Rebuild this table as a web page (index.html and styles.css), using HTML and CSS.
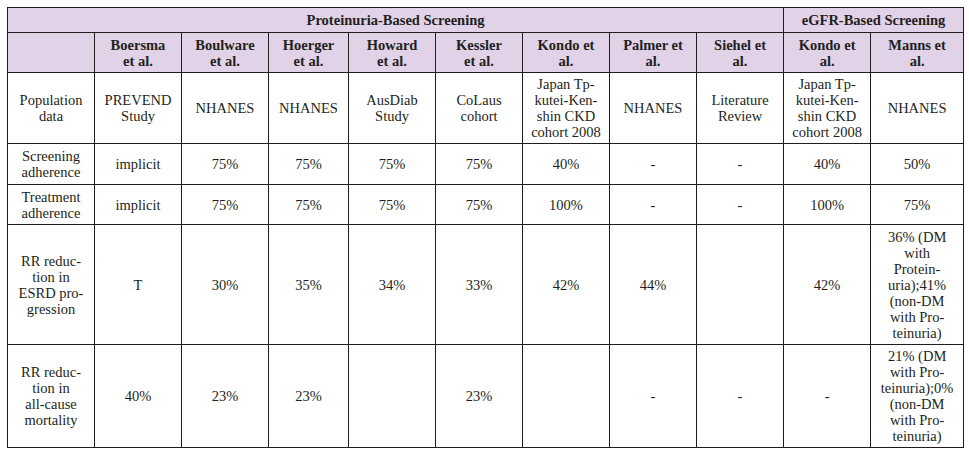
FILE: index.html
```html
<!DOCTYPE html>
<html>
<head>
<meta charset="utf-8">
<link rel="stylesheet" href="styles.css">
</head>
<body>
<table class="grid">
  <colgroup>
    <col class="c87"><col class="c87"><col class="c87"><col class="c80"><col class="c87"><col class="c87"><col class="c87"><col class="c87"><col class="c87"><col class="c87"><col class="c93">
  </colgroup>
  <tr class="r-title head">
    <th colspan="9">Proteinuria-Based Screening</th>
    <th colspan="2">eGFR-Based Screening</th>
  </tr>
  <tr class="r-authors head">
    <th></th>
    <th>Boersma<br>et al.</th>
    <th>Boulware<br>et al.</th>
    <th>Hoerger<br>et al.</th>
    <th>Howard<br>et al.</th>
    <th>Kessler<br>et al.</th>
    <th>Kondo et<br>al.</th>
    <th>Palmer et<br>al.</th>
    <th>Siehel et<br>al.</th>
    <th>Kondo et<br>al.</th>
    <th>Manns et<br>al.</th>
  </tr>
  <tr class="r-pop">
    <td>Population<br>data</td>
    <td>PREVEND<br>Study</td>
    <td>NHANES</td>
    <td>NHANES</td>
    <td>AusDiab<br>Study</td>
    <td>CoLaus<br>cohort</td>
    <td>Japan Tp-<br>kutei-Ken-<br>shin CKD<br>cohort 2008</td>
    <td>NHANES</td>
    <td>Literature<br>Review</td>
    <td>Japan Tp-<br>kutei-Ken-<br>shin CKD<br>cohort 2008</td>
    <td>NHANES</td>
  </tr>
  <tr class="r-screen">
    <td>Screening<br>adherence</td>
    <td>implicit</td>
    <td>75%</td>
    <td>75%</td>
    <td>75%</td>
    <td>75%</td>
    <td>40%</td>
    <td>-</td>
    <td>-</td>
    <td>40%</td>
    <td>50%</td>
  </tr>
  <tr class="r-treat">
    <td>Treatment<br>adherence</td>
    <td>implicit</td>
    <td>75%</td>
    <td>75%</td>
    <td>75%</td>
    <td>75%</td>
    <td>100%</td>
    <td>-</td>
    <td>-</td>
    <td>100%</td>
    <td>75%</td>
  </tr>
  <tr class="r-esrd">
    <td>RR reduc-<br>tion in<br>ESRD pro-<br>gression</td>
    <td>T</td>
    <td>30%</td>
    <td>35%</td>
    <td>34%</td>
    <td>33%</td>
    <td>42%</td>
    <td>44%</td>
    <td></td>
    <td>42%</td>
    <td>36% (DM<br>with<br>Protein-<br>uria);41%<br>(non-DM<br>with Pro-<br>teinuria)</td>
  </tr>
  <tr class="r-mort">
    <td>RR reduc-<br>tion in<br>all-cause<br>mortality</td>
    <td>40%</td>
    <td>23%</td>
    <td>23%</td>
    <td></td>
    <td>23%</td>
    <td></td>
    <td>-</td>
    <td>-</td>
    <td>-</td>
    <td>21% (DM<br>with Pro-<br>teinuria);0%<br>(non-DM<br>with Pro-<br>teinuria)</td>
  </tr>
</table>
</body>
</html>
```
FILE: styles.css
```css
html, body {
  margin: 0;
  padding: 0;
  background: #ffffff;
}
body {
  padding: 7px 0 0 7px;
  font-family: "Liberation Serif", "Times New Roman", serif;
  font-size: 14.5px;
  line-height: 16px;
  color: #231f20;
}
.grid {
  border-collapse: collapse;
  table-layout: fixed;
  width: 957px;
}
.c87 { width: 87px; }
.c80 { width: 80px; }
.c93 { width: 93px; }
.grid th,
.grid td {
  border: 1px solid #1e1e1e;
  padding: 0 2px;
  text-align: center;
  vertical-align: middle;
  font-weight: normal;
}
.head th {
  background: #e1d2e7;
  font-weight: bold;
}
.r-title th { height: 24px; }
.r-authors th { height: 39px; }
.r-pop td { height: 70px; }
.r-screen td { height: 40px; }
.r-treat td { height: 39px; }
.r-esrd td { height: 119px; }
.r-mort td { height: 102px; }
```
